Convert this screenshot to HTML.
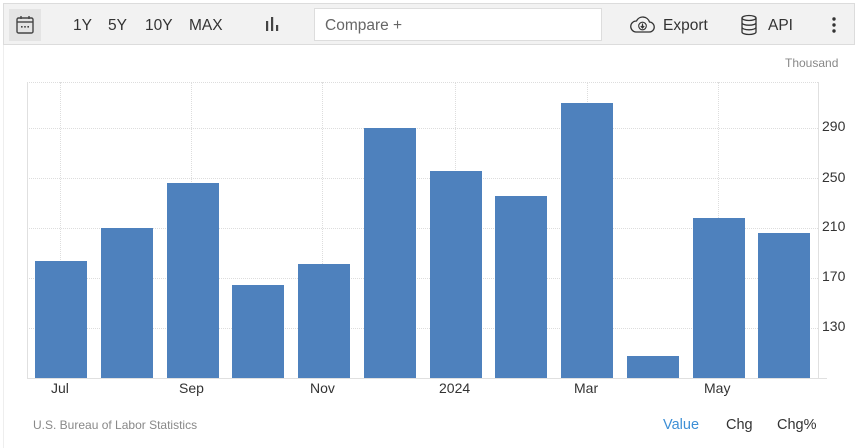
<!DOCTYPE html>
<html><head><meta charset="utf-8"><style>
*{margin:0;padding:0;box-sizing:border-box}
body{width:857px;height:448px;background:#fff;font-family:"Liberation Sans",Arial,sans-serif;position:relative;overflow:hidden}
.a{position:absolute}
.tb{left:3px;top:3px;width:852px;height:42px;background:#f2f2f2;border:1px solid #dcdcdc}
.t{font-size:15.5px;color:#333;top:17px}
.bar{position:absolute;background:#4e81bd;width:52px;bottom:70px}
.hg{position:absolute;left:27px;width:791px;border-top:1px dotted #ddd}
.vg{position:absolute;top:82px;height:296px;border-left:1px dotted #ddd}
.yl{position:absolute;left:822px;font-size:14px;color:#333}
.xl{position:absolute;top:380px;font-size:14px;color:#333}
</style></head><body>
<div class="a" style="left:3px;top:44px;width:1px;height:404px;background:#eee"></div>
<div class="a tb"></div>
<div class="a" style="left:9px;top:9px;width:32px;height:32px;background:#e4e4e4"></div>
<svg class="a" style="left:15px;top:14px" width="20" height="22" viewBox="0 0 20 22"><rect x="2" y="4" width="16" height="15" rx="1.5" fill="none" stroke="#444" stroke-width="1.4"/><line x1="2" y1="8" x2="18" y2="8" stroke="#444" stroke-width="1.4"/><line x1="6" y1="2" x2="6" y2="5" stroke="#444" stroke-width="1.4"/><line x1="14" y1="2" x2="14" y2="5" stroke="#444" stroke-width="1.4"/><rect x="6" y="12" width="1.6" height="1.6" fill="#444"/><rect x="9.2" y="12" width="1.6" height="1.6" fill="#444"/><rect x="12.4" y="12" width="1.6" height="1.6" fill="#444"/></svg>
<div class="a t" style="left:73px">1Y</div>
<div class="a t" style="left:108px">5Y</div>
<div class="a t" style="left:145px">10Y</div>
<div class="a t" style="left:189px">MAX</div>
<svg class="a" style="left:264px;top:16px" width="16" height="16"><rect x="2" y="5" width="2.2" height="10" fill="#444"/><rect x="7" y="1" width="2.2" height="14" fill="#444"/><rect x="12" y="9" width="2.2" height="6" fill="#444"/></svg>
<div class="a" style="left:314px;top:8px;width:288px;height:33px;background:#fff;border:1px solid #ddd"></div>
<div class="a" style="left:325px;top:17px;font-size:15.5px;color:#666">Compare +</div>
<svg class="a" style="left:629px;top:15px" width="27" height="20" viewBox="0 0 27 20"><path d="M7 17 H20 a5 5 0 0 0 0.5-10 a7 7 0 0 0-13-1 a5.5 5.5 0 0 0-0.5 11z" fill="none" stroke="#333" stroke-width="1.3"/><circle cx="13.5" cy="11" r="3.8" fill="none" stroke="#333" stroke-width="1.1"/><path d="M13.5 8.5v4M11.8 11l1.7 2 1.7-2" stroke="#333" stroke-width="1.2" fill="none"/></svg>
<div class="a t" style="left:663px">Export</div>
<svg class="a" style="left:740px;top:14px" width="18" height="22" viewBox="0 0 18 22"><ellipse cx="9" cy="4" rx="7" ry="2.5" fill="none" stroke="#333" stroke-width="1.3"/><path d="M2 4v14c0 1.4 3 2.5 7 2.5s7-1.1 7-2.5V4M2 8.7c0 1.4 3 2.5 7 2.5s7-1.1 7-2.5M2 13.3c0 1.4 3 2.5 7 2.5s7-1.1 7-2.5" fill="none" stroke="#333" stroke-width="1.3"/></svg>
<div class="a t" style="left:768px">API</div>
<svg class="a" style="left:831px;top:16px" width="6" height="18"><circle cx="3" cy="3" r="1.7" fill="#333"/><circle cx="3" cy="9" r="1.7" fill="#333"/><circle cx="3" cy="15" r="1.7" fill="#333"/></svg>
<div class="a" style="left:785px;top:56px;font-size:12px;color:#888">Thousand</div>
<div class="hg" style="top:82px"></div>
<div class="hg" style="top:128px"></div>
<div class="hg" style="top:178px"></div>
<div class="hg" style="top:228px"></div>
<div class="hg" style="top:278px"></div>
<div class="hg" style="top:328px"></div>
<div class="vg" style="left:60px"></div><div class="vg" style="left:191px"></div><div class="vg" style="left:322px"></div><div class="vg" style="left:455px"></div><div class="vg" style="left:587px"></div><div class="vg" style="left:718px"></div>
<div class="a" style="left:27px;top:82px;width:1px;height:297px;background:#e0e0e0"></div>
<div class="a" style="left:818px;top:82px;width:1px;height:297px;background:#e0e0e0"></div>
<div class="a" style="left:27px;top:378px;width:800px;height:1px;background:#e0e0e0"></div>
<div class="bar" style="left:35px;top:261px;height:117px"></div>
<div class="bar" style="left:101px;top:228px;height:150px"></div>
<div class="bar" style="left:167px;top:183px;height:195px"></div>
<div class="bar" style="left:232px;top:285px;height:93px"></div>
<div class="bar" style="left:298px;top:264px;height:114px"></div>
<div class="bar" style="left:364px;top:128px;height:250px"></div>
<div class="bar" style="left:430px;top:171px;height:207px"></div>
<div class="bar" style="left:495px;top:196px;height:182px"></div>
<div class="bar" style="left:561px;top:103px;height:275px"></div>
<div class="bar" style="left:627px;top:356px;height:22px"></div>
<div class="bar" style="left:693px;top:218px;height:160px"></div>
<div class="bar" style="left:758px;top:233px;height:145px"></div>
<div class="yl" style="top:118px">290</div>
<div class="yl" style="top:169px">250</div>
<div class="yl" style="top:218px">210</div>
<div class="yl" style="top:268px">170</div>
<div class="yl" style="top:318px">130</div>
<div class="xl" style="left:51px">Jul</div>
<div class="xl" style="left:179px">Sep</div>
<div class="xl" style="left:310px">Nov</div>
<div class="xl" style="left:439px">2024</div>
<div class="xl" style="left:574px">Mar</div>
<div class="xl" style="left:704px">May</div>
<div class="a" style="left:33px;top:418px;font-size:12px;color:#888">U.S. Bureau of Labor Statistics</div>
<div class="a" style="left:663px;top:417px;font-size:14.5px;color:#3d8fd6">Value</div>
<div class="a" style="left:726px;top:417px;font-size:14.5px;color:#333">Chg</div>
<div class="a" style="left:777px;top:417px;font-size:14.5px;color:#333">Chg%</div>
</body></html>
